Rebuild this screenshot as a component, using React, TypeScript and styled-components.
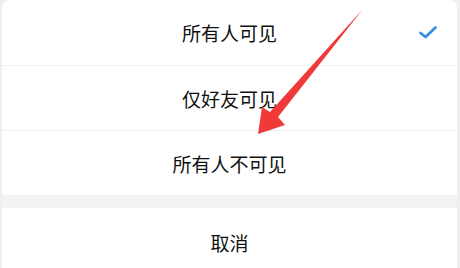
import React from "react";
import styled, { createGlobalStyle } from "styled-components";

const Global = createGlobalStyle`
  html, body { margin: 0; padding: 0; background: #efefef; }
  body { font-family: "Noto Sans CJK SC", "Noto Sans", sans-serif; }
`;

const Page = styled.div`
  position: relative;
  width: 460px;
  height: 268px;
  overflow: hidden;
  padding: 0 3px 0 2px;
  box-sizing: border-box;
  background: #efefef;
`;

const Sheet = styled.div`
  display: flex;
  flex-direction: column;
  background: #ffffff;
  border-radius: 8px 8px 0 0;
  overflow: hidden;
`;

const Option = styled.div<{ $first?: boolean }>`
  position: relative;
  height: 65px;
  box-sizing: border-box;
  display: flex;
  align-items: center;
  justify-content: center;
  font-size: 19px;
  font-weight: 400;
  color: #111111;
  border-top: ${(p) => (p.$first ? "none" : "1px solid #efefef")};
`;

const Gap = styled.div`
  height: 13px;
  background: #f3f3f3;
`;

const Cancel = styled.div`
  height: 68px;
  display: flex;
  align-items: center;
  justify-content: center;
  font-size: 19px;
  font-weight: 400;
  color: #111111;
  box-sizing: border-box;
`;

const Check = styled.svg`
  position: absolute;
  right: 19px;
  top: 25px;
`;

const Arrow = styled.svg`
  position: absolute;
  left: 0;
  top: 0;
  pointer-events: none;
`;

export default function App() {
  return (
    <>
      <Global />
      <Page>
        <Sheet>
          <Option $first>
            所有人可见
            <Check width="20" height="15" viewBox="0 0 20 15">
              <path d="M2.5 8 L7.5 12 L17.5 2.5" fill="none" stroke="#3a8fe4" strokeWidth="2.8" strokeLinecap="round" strokeLinejoin="round" />
            </Check>
          </Option>
          <Option>仅好友可见</Option>
          <Option>所有人不可见</Option>
          <Gap />
          <Cancel>取消</Cancel>
        </Sheet>
        <Arrow width="460" height="268" viewBox="0 0 460 268">
          <polygon
            points="363,9 278,117 285,125 258,134 262,107 270,112"
            fill="#f03a3a"
            strokeLinejoin="round"
          />
        </Arrow>
      </Page>
    </>
  );
}
